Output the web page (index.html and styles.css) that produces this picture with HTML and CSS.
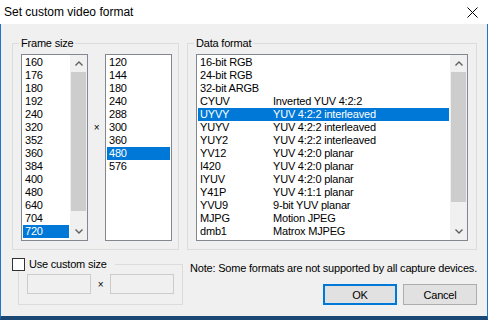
FILE: index.html
```html
<!DOCTYPE html>
<html lang="en">
<head>
    <meta charset="UTF-8">
    <title>Set custom video format</title>
    <link rel="stylesheet" href="styles.css">
</head>
<body>
    <div class="window">
        <div class="titlebar">
            <span class="title">Set custom video format</span>
            <svg class="close" width="11" height="11" viewBox="0 0 11 11">
                <path d="M0.5 0.5 L10.5 10.5 M10.5 0.5 L0.5 10.5" stroke="#000" stroke-width="1" fill="none"/>
            </svg>
        </div>
        <div class="client">
            <div class="top-row">
                <fieldset class="group frame-group">
                    <legend>Frame size</legend>
                    <div class="frame-lists">
                        <div class="listbox size-list">
                            <div class="list-items">
                                <div class="row">160</div>
                                <div class="row">176</div>
                                <div class="row">180</div>
                                <div class="row">192</div>
                                <div class="row">240</div>
                                <div class="row">320</div>
                                <div class="row">352</div>
                                <div class="row">360</div>
                                <div class="row">384</div>
                                <div class="row">400</div>
                                <div class="row">480</div>
                                <div class="row">640</div>
                                <div class="row">704</div>
                                <div class="row selected">720</div>
                            </div>
                            <div class="vscroll">
                                <div class="arrow"><svg width="8" height="5" viewBox="0 0 8 5"><path d="M0.5 4.5 L4 1 L7.5 4.5" stroke="#606060" stroke-width="1.4" fill="none"/></svg></div>
                                <div class="thumb size-thumb"></div>
                                <div class="track"></div>
                                <div class="arrow"><svg width="8" height="5" viewBox="0 0 8 5"><path d="M0.5 0.5 L4 4 L7.5 0.5" stroke="#606060" stroke-width="1.4" fill="none"/></svg></div>
                            </div>
                        </div>
                        <span class="times size-times">×</span>
                        <div class="listbox size-list">
                            <div class="list-items">
                                <div class="row">120</div>
                                <div class="row">144</div>
                                <div class="row">180</div>
                                <div class="row">240</div>
                                <div class="row">288</div>
                                <div class="row">300</div>
                                <div class="row">360</div>
                                <div class="row selected">480</div>
                                <div class="row">576</div>
                            </div>
                        </div>
                    </div>
                </fieldset>
                <fieldset class="group format-group">
                    <legend>Data format</legend>
                    <div class="listbox format-list">
                        <div class="list-items">
                            <div class="row"><span class="code">16-bit RGB</span></div>
                            <div class="row"><span class="code">24-bit RGB</span></div>
                            <div class="row"><span class="code">32-bit ARGB</span></div>
                            <div class="row"><span class="code">CYUV</span><span>Inverted YUV 4:2:2</span></div>
                            <div class="row selected"><span class="code">UYVY</span><span>YUV 4:2:2 interleaved</span></div>
                            <div class="row"><span class="code">YUYV</span><span>YUV 4:2:2 interleaved</span></div>
                            <div class="row"><span class="code">YUY2</span><span>YUV 4:2:2 interleaved</span></div>
                            <div class="row"><span class="code">YV12</span><span>YUV 4:2:0 planar</span></div>
                            <div class="row"><span class="code">I420</span><span>YUV 4:2:0 planar</span></div>
                            <div class="row"><span class="code">IYUV</span><span>YUV 4:2:0 planar</span></div>
                            <div class="row"><span class="code">Y41P</span><span>YUV 4:1:1 planar</span></div>
                            <div class="row"><span class="code">YVU9</span><span>9-bit YUV planar</span></div>
                            <div class="row"><span class="code">MJPG</span><span>Motion JPEG</span></div>
                            <div class="row"><span class="code">dmb1</span><span>Matrox MJPEG</span></div>
                        </div>
                        <div class="vscroll">
                            <div class="arrow"><svg width="8" height="5" viewBox="0 0 8 5"><path d="M0.5 4.5 L4 1 L7.5 4.5" stroke="#606060" stroke-width="1.4" fill="none"/></svg></div>
                            <div class="thumb format-thumb"></div>
                            <div class="track"></div>
                            <div class="arrow"><svg width="8" height="5" viewBox="0 0 8 5"><path d="M0.5 0.5 L4 4 L7.5 0.5" stroke="#606060" stroke-width="1.4" fill="none"/></svg></div>
                        </div>
                    </div>
                </fieldset>
            </div>
            <div class="bottom-row">
                <fieldset class="group custom-group">
                    <legend><label class="check"><span class="checkbox"></span>Use custom size</label></legend>
                    <div class="custom-inputs">
                        <span class="edit"></span>
                        <span class="times">×</span>
                        <span class="edit"></span>
                    </div>
                </fieldset>
                <div class="actions">
                    <p class="note">Note: Some formats are not supported by all capture devices.</p>
                    <div class="buttons">
                        <button class="btn btn-default">OK</button>
                        <button class="btn">Cancel</button>
                    </div>
                </div>
            </div>
        </div>
    </div>
</body>
</html>
```

FILE: styles.css
```css
body {
    margin: 0;
    background-color: #fff;
    font-family: "Liberation Sans", Arial, sans-serif;
}
.window {
    width: 488px;
    height: 320px;
    display: flex;
    flex-direction: column;
}
.titlebar {
    height: 24px;
    flex: none;
    display: flex;
    align-items: center;
    justify-content: space-between;
    padding: 0 10px 0 4px;
    background-color: #fff;
    font-size: 12px;
    color: #000;
}
.close {
    display: block;
    margin-top: 1px;
}
.client {
    flex: 1;
    background-color: #f0f0f0;
    border: 1px solid #1a78cc;
    border-top: none;
    border-bottom: 4px solid #1b4775;
    padding: 13px 10px 0 11px;
    font-size: 11px;
    letter-spacing: -0.2px;
    color: #000;
}
.top-row {
    display: flex;
    gap: 8px;
}
.group {
    margin: 0;
    min-width: 0;
    border: 1px solid #dcdcdc;
    padding: 4px 8px 8px 8px;
    box-sizing: border-box;
}
.group legend {
    padding: 0 2px;
    margin-left: -2px;
    line-height: 13px;
}
.frame-group {
    width: 167px;
    padding-right: 6px;
}
.format-group {
    width: 290px;
}
.frame-lists {
    display: flex;
    align-items: flex-start;
}
.times {
    width: 17px;
    text-align: center;
    font-size: 10px;
    line-height: 13px;
}
.size-times {
    margin-top: 67px;
}
.listbox {
    display: flex;
    height: 187px;
    box-sizing: border-box;
    border: 1px solid #828790;
    background-color: #fff;
}
.size-list {
    width: 67px;
}
.format-list {
    width: 272px;
}
.list-items {
    flex: 1;
    padding: 1px;
    overflow: hidden;
}
.row {
    height: 13px;
    line-height: 13px;
    padding-left: 2px;
    white-space: nowrap;
    display: flex;
}
.row.selected {
    background-color: #0078d7;
    color: #fff;
}
.code {
    width: 73px;
    flex: none;
}
.vscroll {
    width: 17px;
    flex: none;
    display: flex;
    flex-direction: column;
    background-color: #f0f0f0;
}
.arrow {
    height: 17px;
    flex: none;
    display: flex;
    align-items: center;
    justify-content: center;
}
.arrow svg {
    display: block;
}
.thumb {
    background-color: #cdcdcd;
    margin: 0 1px;
    flex: none;
}
.size-thumb {
    height: 139px;
}
.format-thumb {
    height: 130px;
}
.track {
    flex: 1;
}
.bottom-row {
    display: flex;
    margin-top: 8px;
}
.custom-group {
    width: 167px;
    margin-left: 6px;
    padding: 3px 8px 10px 8px;
}
.custom-group legend {
    margin-left: -15px;
    padding: 0 8px 0 0;
}
.check {
    display: flex;
    align-items: center;
}
.checkbox {
    width: 13px;
    height: 13px;
    box-sizing: border-box;
    border: 1px solid #333;
    background-color: #fff;
    margin-right: 4px;
}
.custom-inputs {
    display: flex;
    align-items: center;
}
.custom-inputs .times {
    width: 19px;
}
.edit {
    width: 65px;
    height: 20px;
    box-sizing: border-box;
    border: 1px solid #ccc;
    background-color: #f0f0f0;
}
.actions {
    flex: 1;
    margin-left: 7px;
}
.note {
    margin: 4px 0 0;
    line-height: 13px;
    white-space: nowrap;
}
.buttons {
    display: flex;
    justify-content: flex-end;
    gap: 6px;
    margin-top: 9px;
}
.btn {
    width: 74px;
    height: 21px;
    box-sizing: border-box;
    border: 1px solid #adadad;
    background-color: #e1e1e1;
    font-family: inherit;
    font-size: 11px;
    letter-spacing: -0.2px;
    color: #000;
    padding: 0;
}
.btn-default {
    border: 2px solid #0078d7;
}
```
